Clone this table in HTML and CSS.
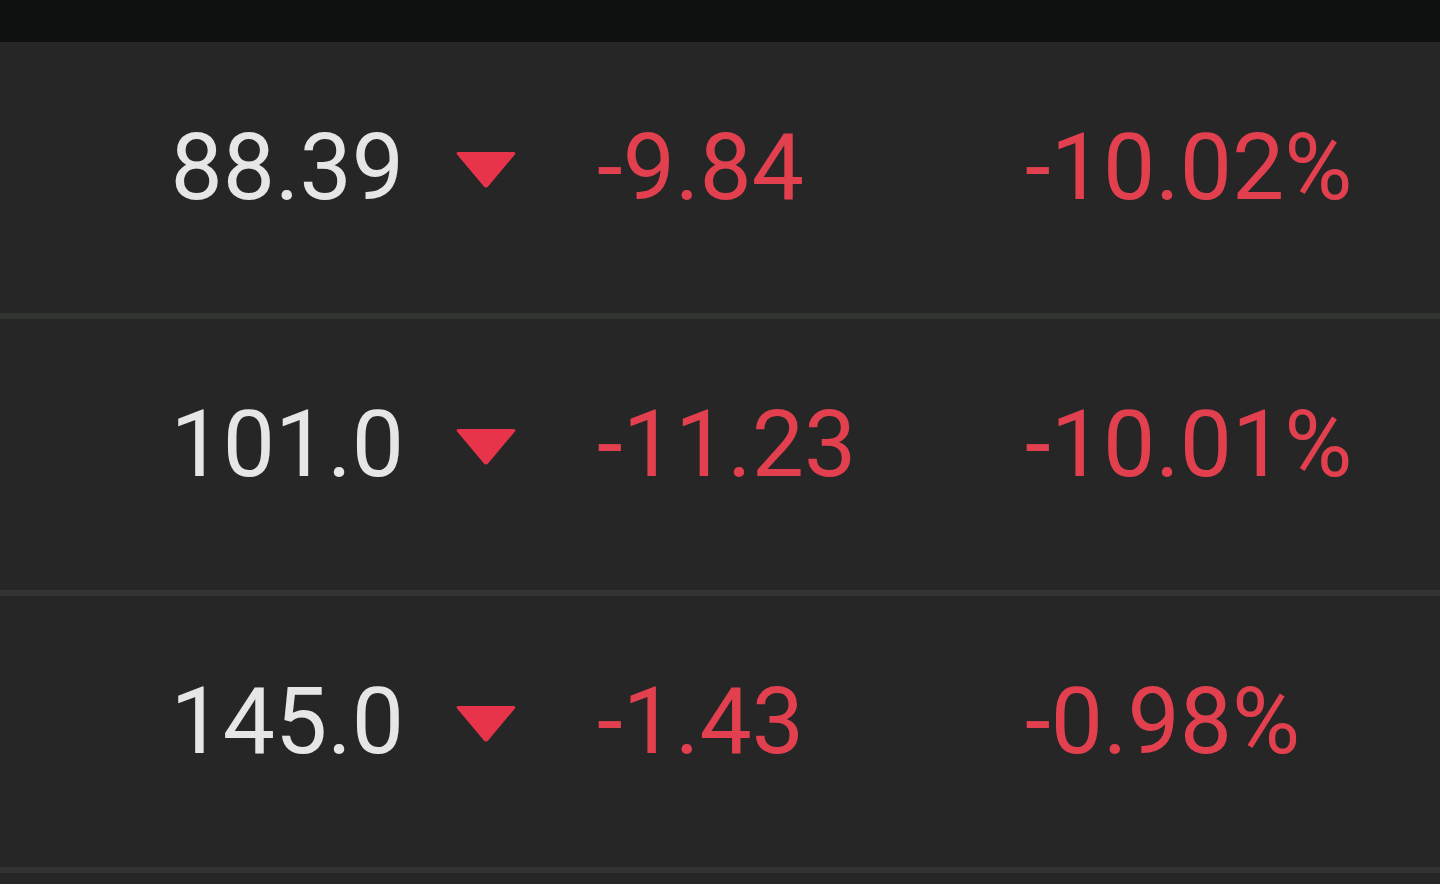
FILE: index.html
```html
<!DOCTYPE html>
<html lang="en">
<head>
<meta charset="utf-8">
<title>Quotes</title>
<link rel="stylesheet" href="styles.css">
</head>
<body>
<div class="topbar"></div>
<div class="list">
  <div class="row">
    <span class="price">88.39</span>
    <svg class="arrow" viewBox="0 0 62 38" width="62" height="38"><path d="M4 1 L58 1 Q62 1 59.5 4 L33.5 35 Q31 38 28.5 35 L2.5 4 Q0 1 4 1 Z" fill="#e8344b"/></svg>
    <span class="change">-9.84</span>
    <span class="pct">-10.02%</span>
  </div>
  <div class="row">
    <span class="price">101.0</span>
    <svg class="arrow" viewBox="0 0 62 38" width="62" height="38"><path d="M4 1 L58 1 Q62 1 59.5 4 L33.5 35 Q31 38 28.5 35 L2.5 4 Q0 1 4 1 Z" fill="#e8344b"/></svg>
    <span class="change">-11.23</span>
    <span class="pct">-10.01%</span>
  </div>
  <div class="row">
    <span class="price">145.0</span>
    <svg class="arrow" viewBox="0 0 62 38" width="62" height="38"><path d="M4 1 L58 1 Q62 1 59.5 4 L33.5 35 Q31 38 28.5 35 L2.5 4 Q0 1 4 1 Z" fill="#e8344b"/></svg>
    <span class="change">-1.43</span>
    <span class="pct">-0.98%</span>
  </div>
</div>
</body>
</html>
```

FILE: styles.css
```css
html, body {
  margin: 0;
  padding: 0;
  background: #262626;
  height: 100%;
  overflow: hidden;
}
body {
  font-family: Roboto, "Liberation Sans", sans-serif;
}
.topbar {
  height: 42px;
  background: #0e110f;
}
.list {
  display: flex;
  flex-direction: column;
}
.row {
  box-sizing: border-box;
  height: 277px;
  border-bottom: 6px solid #323432;
  padding-bottom: 20px;
  display: flex;
  align-items: center;
  font-size: 93px;
  line-height: 1;
}
.price {
  width: 404px;
  text-align: right;
  color: #e6e6e6;
  flex: none;
}
.arrow {
  margin-left: 51px;
  flex: none;
  margin-top: 4px;
}
.change {
  margin-left: 80px;
  width: 428px;
  color: #e2404f;
  flex: none;
}
.pct {
  color: #e2404f;
  flex: none;
}
```
